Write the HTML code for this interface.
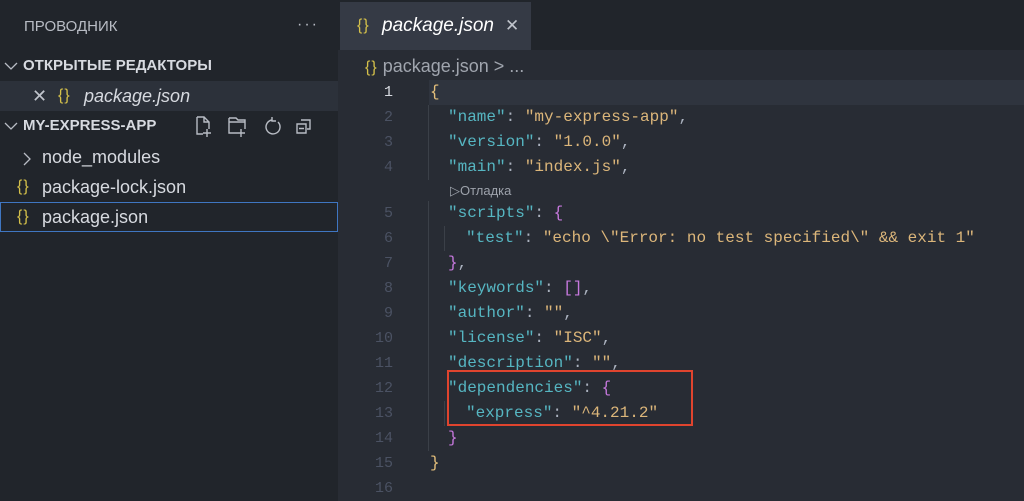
<!DOCTYPE html>
<html><head><meta charset="utf-8"><style>
*{margin:0;padding:0;box-sizing:border-box}
body{width:1024px;height:501px;overflow:hidden;background:#282c34;font-family:"Liberation Sans","Noto Sans CJK JP",sans-serif;color:#d7dae0;position:relative}
#side{position:absolute;left:0;top:0;width:338px;height:501px;background:#21252b}
.row{position:absolute;left:0;width:338px;height:30px;line-height:30px;font-size:18px;white-space:nowrap}
.hdr{font-weight:bold;font-size:15px;color:#d7dae0}
.br{color:#d5c14a;font-family:"Liberation Sans",sans-serif;font-size:16px;letter-spacing:1px}
#tabbar{position:absolute;left:338px;top:0;right:0;height:50px;background:#21252b}
#tab{position:absolute;left:340px;top:2px;width:191px;height:48px;background:#353a45;font-size:19px;line-height:48px}
#code{position:absolute;left:338px;top:80px;right:0;font-family:"Liberation Mono",monospace;font-size:16px}
.l{position:relative;height:25px;line-height:25px;white-space:pre}
.n{position:absolute;left:0;width:55px;text-align:right;color:#4b5263;font-size:15px}
.c{position:absolute;left:92px;color:#abb2bf}
.i1{left:110px}.i2{left:128px}
.k{color:#56b6c2}.s{color:#dcb67a}.y{color:#e5c07b}.p{color:#c678dd}
.guide{position:absolute;width:1px;background:#3b4048}
.chev{position:absolute;top:10px}
</style></head><body>
<div id="side">
 <div class="row" style="top:12px;left:24px;font-size:15px;color:#b8bcc4">ПРОВОДНИК</div>
 <div class="row" style="top:10px;left:297px;font-size:16px;color:#b8bcc4;letter-spacing:2px">···</div>
 <div class="row hdr" style="top:51px"><svg class="chev" style="left:4px" width="14" height="10" fill="none" stroke="#b8bcc4" stroke-width="1.3"><path d="M1 2l6 6 6-6"/></svg><span style="position:absolute;left:23px">ОТКРЫТЫЕ РЕДАКТОРЫ</span></div>
 <div class="row" style="top:81px;background:#2c313a"><span style="position:absolute;left:32px;color:#c0c4cc">✕</span><span class="br" style="position:absolute;left:58px">{}</span><span style="position:absolute;left:84px;font-style:italic">package.json</span></div>
 <div class="row hdr" style="top:111px"><svg class="chev" style="left:4px" width="14" height="10" fill="none" stroke="#b8bcc4" stroke-width="1.3"><path d="M1 2l6 6 6-6"/></svg><span style="position:absolute;left:23px">MY-EXPRESS-APP</span>
  <svg style="position:absolute;left:193px;top:4px" width="120" height="22" fill="none" stroke="#b8bcc4" stroke-width="1.4">
   <path d="M4 2h7l5 5v7M4 2v17h6M11 2v5h5M14 14v8M10 18h8"/>
   <path d="M36 3h7l2 2h7v9M36 3v15h8M36 7h16M48 14v8M44 18h8"/>
   <path d="M79 5a7 7 0 1 0 6 2M79 2l0 4 4 0"/>
   <path d="M108 5h9v9h-3M104 9h9v9h-9zM106 13.5h5"/>
  </svg></div>
 <div class="row" style="top:142px"><svg class="chev" style="left:22px" width="10" height="14" fill="none" stroke="#b8bcc4" stroke-width="1.3"><path d="M2 1l6 6-6 6"/></svg><span style="position:absolute;left:42px">node_modules</span></div>
 <div class="row" style="top:172px"><span class="br" style="position:absolute;left:17px">{}</span><span style="position:absolute;left:42px">package-lock.json</span></div>
 <div class="row" style="top:202px;border:1px solid #3f76c2;line-height:28px"><span class="br" style="position:absolute;left:16px">{}</span><span style="position:absolute;left:41px">package.json</span></div>
</div>
<div id="tabbar"></div>
<div id="tab"><span class="br" style="position:absolute;left:17px">{}</span><span style="position:absolute;left:42px;font-style:italic;color:#fff">package.json</span><span style="position:absolute;left:165px;color:#c0c4cc;font-size:17px">✕</span></div>
<div style="position:absolute;left:365px;top:54px;height:24px;line-height:24px;font-size:18px;color:#a0a5ae;white-space:nowrap"><span class="br">{}</span> package.json &gt; ...</div>
<div style="position:absolute;left:429px;top:80px;right:0;height:25px;background:#2f343e"></div>
<div id="code">
 <div class="guide" style="left:90px;top:25px;height:75px"></div>
 <div class="guide" style="left:90px;top:121px;height:250px"></div>
 <div class="guide" style="left:106px;top:146px;height:25px"></div>
 <div class="guide" style="left:106px;top:321px;height:25px"></div>
 <div class="l"><span class="n" style="color:#d7dae0">1</span><span class="c"><span class="y">{</span></span></div>
 <div class="l"><span class="n">2</span><span class="c i1"><span class="k">"name"</span>: <span class="s">"my-express-app"</span>,</span></div>
 <div class="l"><span class="n">3</span><span class="c i1"><span class="k">"version"</span>: <span class="s">"1.0.0"</span>,</span></div>
 <div class="l"><span class="n">4</span><span class="c i1"><span class="k">"main"</span>: <span class="s">"index.js"</span>,</span></div>
 <div class="l" style="height:21px;line-height:21px"><span style="position:absolute;left:112px;font-family:'Liberation Sans',sans-serif;font-size:13px;color:#9da2ab">▷Отладка</span></div>
 <div class="l"><span class="n">5</span><span class="c i1"><span class="k">"scripts"</span>: <span class="p">{</span></span></div>
 <div class="l"><span class="n">6</span><span class="c i2"><span class="k">"test"</span>: <span class="s">"echo \"Error: no test specified\" &amp;&amp; exit 1"</span></span></div>
 <div class="l"><span class="n">7</span><span class="c i1"><span class="p">}</span>,</span></div>
 <div class="l"><span class="n">8</span><span class="c i1"><span class="k">"keywords"</span>: <span class="p">[]</span>,</span></div>
 <div class="l"><span class="n">9</span><span class="c i1"><span class="k">"author"</span>: <span class="s">""</span>,</span></div>
 <div class="l"><span class="n">10</span><span class="c i1"><span class="k">"license"</span>: <span class="s">"ISC"</span>,</span></div>
 <div class="l"><span class="n">11</span><span class="c i1"><span class="k">"description"</span>: <span class="s">""</span>,</span></div>
 <div class="l"><span class="n">12</span><span class="c i1"><span class="k">"dependencies"</span>: <span class="p">{</span></span></div>
 <div class="l"><span class="n">13</span><span class="c i2"><span class="k">"express"</span>: <span class="s">"^4.21.2"</span></span></div>
 <div class="l"><span class="n">14</span><span class="c i1"><span class="p">}</span></span></div>
 <div class="l"><span class="n">15</span><span class="c"><span class="y">}</span></span></div>
 <div class="l"><span class="n">16</span></div>
</div>
<div style="position:absolute;left:447px;top:370px;width:246px;height:56px;border:2px solid #e0442e"></div>
</body></html>
